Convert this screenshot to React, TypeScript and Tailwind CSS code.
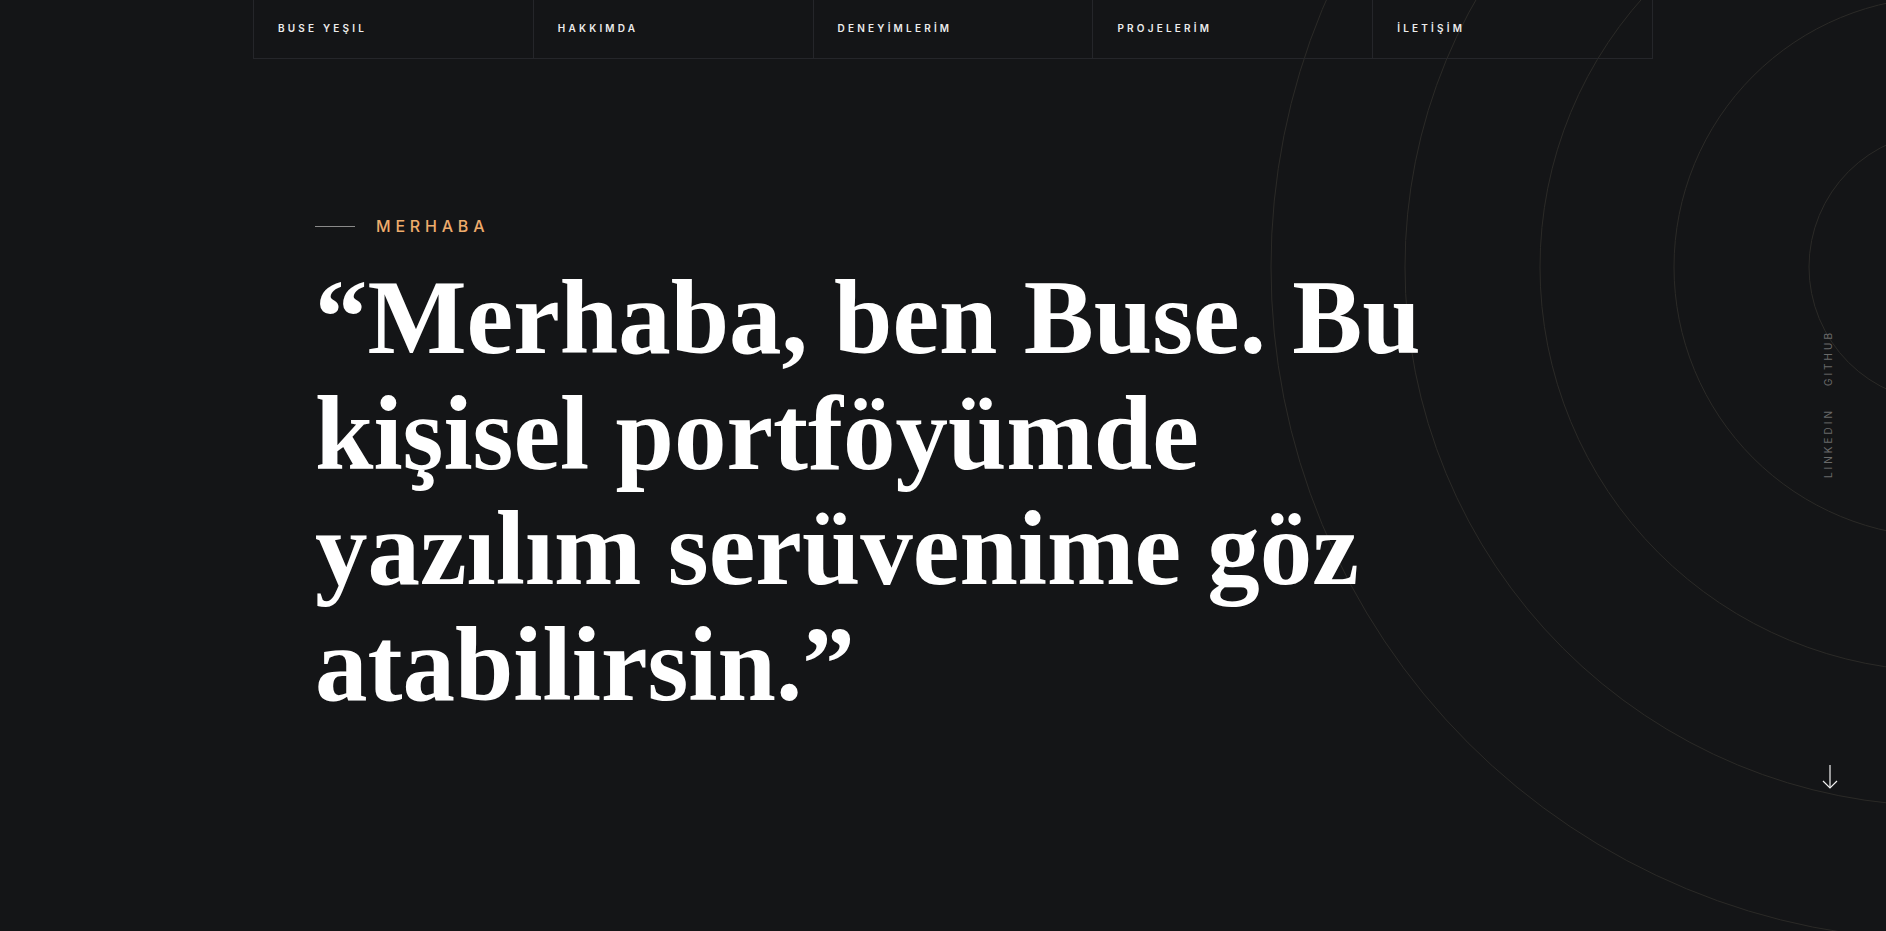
import React from "react";

const navItems = ["BUSE YEŞIL", "HAKKIMDA", "DENEYİMLERİM", "PROJELERİM", "İLETİŞİM"];

const Rings = () => {
  const radii = [135, 270, 404, 539, 673];
  return (
    <svg
      className="absolute inset-0 pointer-events-none"
      width="1886"
      height="931"
      viewBox="0 0 1886 931"
      fill="none"
    >
      {radii.map((r) => (
        <circle key={r} cx="1944" cy="267" r={r} stroke="#2b2a27" strokeWidth="1" />
      ))}
    </svg>
  );
};

const App = () => {
  return (
    <main className="relative h-[931px] w-full overflow-hidden bg-[#141517] font-['Inter',sans-serif]">
      <Rings />

      <nav className="relative flex ml-[253px] w-[1400px] h-[59px] border-x border-b border-[#25262a]">
        {navItems.map((item, i) => (
          <div
            key={item}
            className={`flex-1 flex items-center pl-6 pb-[2px] ${i < navItems.length - 1 ? "border-r border-[#25262a]" : ""}`}
          >
            <span className="text-[10px] font-semibold tracking-[0.32em] text-[#ececec]">
              {item}
            </span>
          </div>
        ))}
      </nav>

      <section className="relative pl-[315px] pt-[157px]">
        <div className="flex items-center gap-[21px] h-[20px]">
          <span className="block w-[40px] h-px bg-[#8a8a8a]" />
          <span className="text-[16px] font-medium tracking-[0.3em] text-[#eeab6c]">
            MERHABA
          </span>
        </div>
        <h1 className="mt-[24px] font-['Liberation_Serif',serif] font-bold text-[105px] leading-[115.5px] text-white">
          “Merhaba, ben Buse. Bu
          <br />
          kişisel portföyümde
          <br />
          yazılım serüvenime göz
          <br />
          atabilirsin.”
        </h1>
      </section>

      <div className="absolute left-[1821px] top-[330px] flex flex-col gap-[22px]">
        <span className="[writing-mode:vertical-rl] rotate-180 text-[10px] tracking-[0.3em] text-[#6a6a6a]">
          GITHUB
        </span>
        <span className="[writing-mode:vertical-rl] rotate-180 text-[10px] tracking-[0.3em] text-[#6a6a6a]">
          LINKEDIN
        </span>
      </div>

      <svg
        className="absolute left-[1822px] top-[765px]"
        width="16"
        height="25"
        viewBox="0 0 16 25"
        fill="none"
        stroke="#f2f2f2"
        strokeWidth="1.2"
      >
        <path d="M8 0 V23" />
        <path d="M1 16 L8 23 L15 16" />
      </svg>
    </main>
  );
};

export default App;
